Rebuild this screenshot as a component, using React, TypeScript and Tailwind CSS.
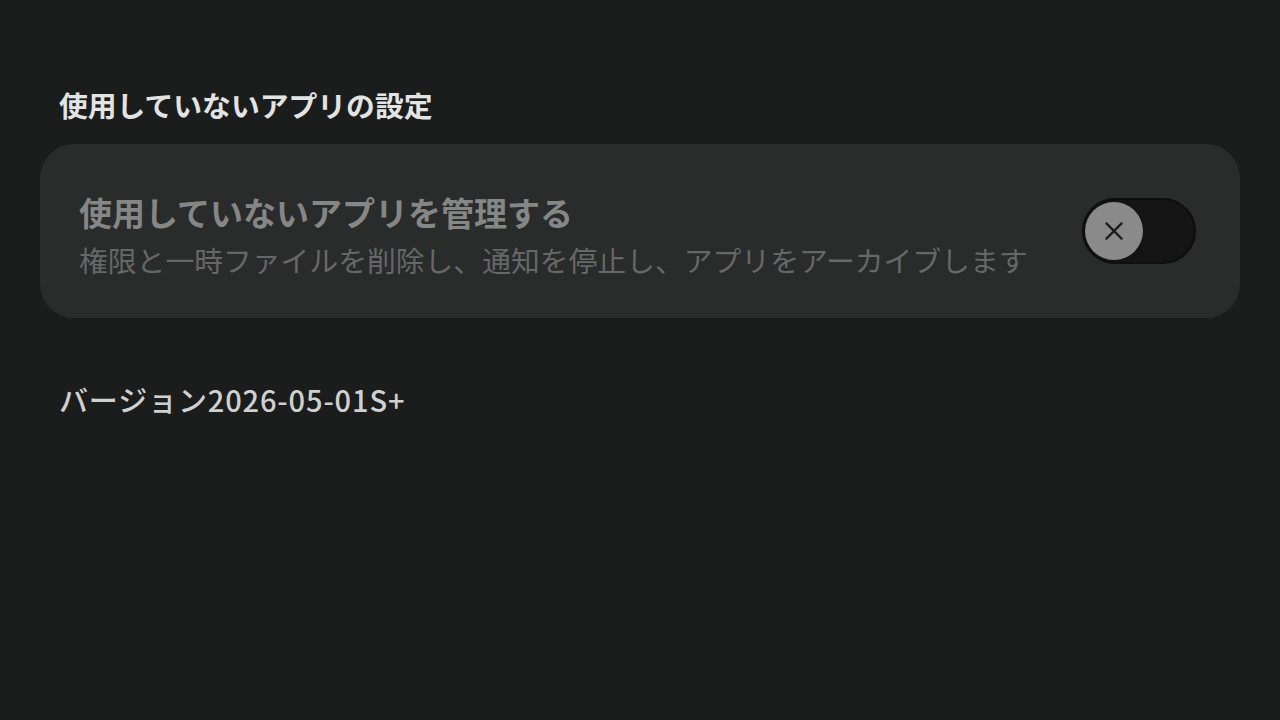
import React, { useState } from 'react';

const font = { fontFamily: '"Noto Sans CJK JP", "Noto Sans", sans-serif' };

const XIcon: React.FC = () => (
    <svg width="26" height="26" viewBox="0 0 24 24" fill="none" stroke="#1c1c1c" strokeWidth="2.1" strokeLinecap="round">
        <path d="M5 5 L19 19" />
        <path d="M19 5 L5 19" />
    </svg>
);

const App: React.FC = () => {
    const [enabled, setEnabled] = useState(false);

    return (
        <div className="min-h-screen w-full bg-[#1b1c1c] px-[40px] pt-[85px]" style={font}>
            <h2 className="pl-[19px] text-[28.8px] leading-[40px] font-bold text-[#e2e3e3]">使用していないアプリの設定</h2>

            <div className="mt-[19px] flex h-[174px] items-center justify-between rounded-[34px] bg-[#2a2b2b] pl-[39px] pr-[44px]">
                <div className="flex flex-col pt-[8px]">
                    <p className="text-[33px] leading-[44px] font-bold text-[#858686]">使用していないアプリを管理する</p>
                    <p className="mt-[6px] text-[28.8px] leading-[40px] text-[#666767]">権限と一時ファイルを削除し、通知を停止し、アプリをアーカイブします</p>
                </div>
                <button
                    onClick={() => setEnabled(!enabled)}
                    className="flex h-[66px] w-[114px] items-center rounded-full border-2 border-[#0e0e0e] bg-[#141414] px-[1px]"
                >
                    <span className="flex h-[58px] w-[58px] items-center justify-center rounded-full bg-[#8a8a8a]">
                        <XIcon />
                    </span>
                </button>
            </div>

            <p className="mt-[61px] pl-[19px] text-[29px] leading-[40px] font-medium tracking-[0.03em] text-[#cfd0d0]">バージョン2026-05-01S+</p>
        </div>
    );
};

export default App;
